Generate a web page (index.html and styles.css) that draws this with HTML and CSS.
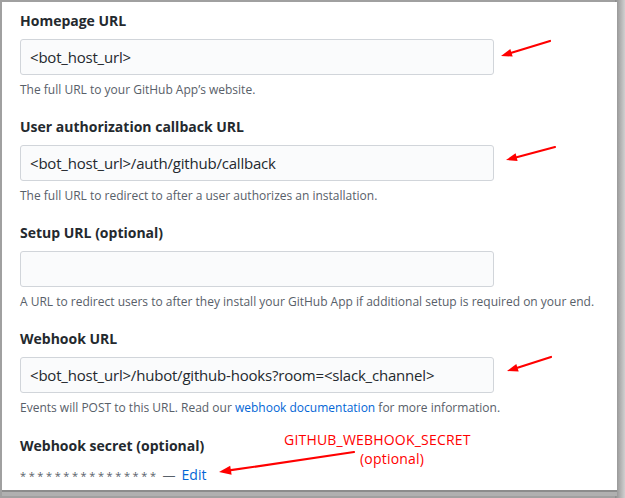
FILE: index.html
```html
<!DOCTYPE html>
<html>
<head>
<meta charset="utf-8">
<link rel="stylesheet" href="styles.css">
</head>
<body>
<div class="frame">
  <div class="panel">
    <div class="field">
      <label class="label">Homepage URL</label>
      <div class="input">&lt;bot_host_url&gt;</div>
      <p class="note">The full URL to your GitHub App’s website.</p>
    </div>
    <div class="field">
      <label class="label">User authorization callback URL</label>
      <div class="input">&lt;bot_host_url&gt;/auth/github/callback</div>
      <p class="note">The full URL to redirect to after a user authorizes an installation.</p>
    </div>
    <div class="field">
      <label class="label">Setup URL (optional)</label>
      <div class="input"></div>
      <p class="note">A URL to redirect users to after they install your GitHub App if additional setup is required on your end.</p>
    </div>
    <div class="field">
      <label class="label">Webhook URL</label>
      <div class="input">&lt;bot_host_url&gt;/hubot/github-hooks?room=&lt;slack_channel&gt;</div>
      <p class="note">Events will POST to this URL. Read our <a class="link" href="#">webhook documentation</a> for more information.</p>
    </div>
    <div class="field last">
      <label class="label">Webhook secret (optional)</label>
      <div class="secret"><span class="stars">****************</span><span class="dash">—</span><a class="link edit" href="#">Edit</a></div>
    </div>

    <div class="annot">
      <div>GITHUB_WEBHOOK_SECRET</div>
      <div class="annot-sub">(optional)</div>
    </div>

    <svg class="arrows" width="615" height="488" viewBox="0 0 615 488">
      <g stroke="#f00" stroke-width="2.2" fill="none" stroke-linecap="round">
        <line x1="548" y1="39" x2="509.5" y2="50.8"/>
        <line x1="553" y1="145" x2="514.6" y2="155.2"/>
        <line x1="549" y1="355" x2="515.5" y2="365.7"/>
        <line x1="352" y1="450" x2="228.9" y2="468.2"/>
      </g>
      <g fill="#f00">
        <polygon points="499,54 510.7,54.6 508.3,47.0"/>
        <polygon points="504,158 515.6,159.0 513.6,151.3"/>
        <polygon points="505,369 516.7,369.5 514.3,361.9"/>
        <polygon points="217,470 229.6,472.7 228.2,463.8"/>
      </g>
    </svg>
  </div>
</div>
</body>
</html>
```

FILE: styles.css
```css
html, body {
  margin: 0;
  padding: 0;
  background: #fff;
}

.frame {
  box-sizing: border-box;
  width: 625px;
  height: 498px;
  padding: 2px 0 0 2px;
  background: linear-gradient(to right, #a0a0a0 0, #a0a0a0 615px, #8c8c8c 615px, #d0d0d0 625px);
  display: flex;
}

.panel {
  position: relative;
  box-sizing: border-box;
  width: 615px;
  height: 488px;
  background: #fff;
  padding: 9px 0 0 18px;
  font-family: "Open Sans", "Noto Sans", sans-serif;
  color: #24292e;
  box-shadow: 0 2px 0 #8c8c8c, 0 6px 0 #b0b0b0;
}

.field {
  margin-bottom: 18px;
}

.field.last {
  padding-top: 1px;
}

.label {
  display: block;
  font-weight: 700;
  font-size: 14px;
  line-height: 20px;
  height: 20px;
  margin-bottom: 8px;
}

.input {
  box-sizing: border-box;
  width: 474px;
  height: 36px;
  background: #fafbfc;
  border: 1px solid #d1d5da;
  border-radius: 3px;
  padding: 0 9px;
  font-size: 15px;
  line-height: 34px;
  letter-spacing: -0.2px;
  color: #24292e;
}

.note {
  margin: 6px 0 0;
  font-size: 12px;
  line-height: 18px;
  color: #586069;
}

.link {
  color: #0366d6;
  text-decoration: none;
}

.secret {
  margin-top: 10px;
  font-size: 12px;
  line-height: 18px;
  color: #586069;
}

.stars {
  letter-spacing: 2.6px;
  font-size: 11px;
}

.dash {
  font-size: 13px;
  margin: 0 6px 0 4px;
}

.edit {
  font-size: 14px;
}

.annot {
  position: absolute;
  left: 282px;
  top: 428px;
  color: #f00;
  font-family: "Open Sans", "Noto Sans", sans-serif;
  font-size: 14px;
  line-height: 19px;
  letter-spacing: 0.2px;
}

.annot-sub {
  padding-left: 76px;
}

.arrows {
  position: absolute;
  left: 0;
  top: 0;
  pointer-events: none;
}
```
